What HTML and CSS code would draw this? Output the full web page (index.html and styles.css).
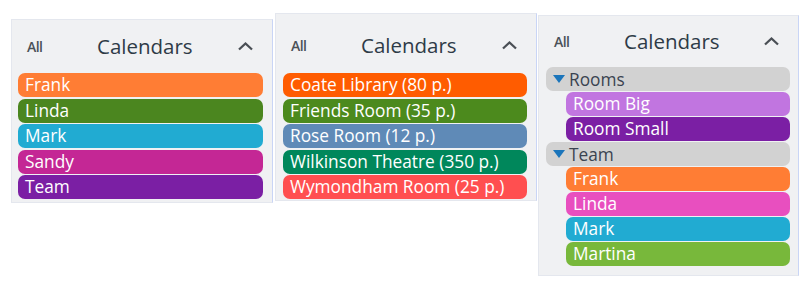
FILE: index.html
```html
<!DOCTYPE html>
<html lang="en">
<head>
    <meta charset="UTF-8">
    <title>Calendars</title>
    <link rel="stylesheet" href="styles.css">
</head>
<body>
    <div class="row">
        <div class="panel panel-people">
            <div class="head">
                <span class="all">All</span>
                <span class="title">Calendars</span>
                <svg class="chev" width="17" height="10" viewBox="0 0 17 10"><path d="M2 8.5 L8.5 2.5 L15 8.5" fill="none" stroke="#4a4f55" stroke-width="2.3"/></svg>
            </div>
            <div class="list">
                <div class="item c-frank">Frank</div>
                <div class="item c-linda">Linda</div>
                <div class="item c-mark">Mark</div>
                <div class="item c-sandy">Sandy</div>
                <div class="item c-team">Team</div>
            </div>
        </div>

        <div class="panel panel-rooms">
            <div class="head">
                <span class="all">All</span>
                <span class="title">Calendars</span>
                <svg class="chev" width="17" height="10" viewBox="0 0 17 10"><path d="M2 8.5 L8.5 2.5 L15 8.5" fill="none" stroke="#4a4f55" stroke-width="2.3"/></svg>
            </div>
            <div class="list">
                <div class="item c-coate">Coate Library (80 p.)</div>
                <div class="item c-friends">Friends Room (35 p.)</div>
                <div class="item c-rose">Rose Room (12 p.)</div>
                <div class="item c-wilkinson">Wilkinson Theatre (350 p.)</div>
                <div class="item c-wymondham">Wymondham Room (25 p.)</div>
            </div>
        </div>

        <div class="panel panel-groups">
            <div class="head">
                <span class="all">All</span>
                <span class="title">Calendars</span>
                <svg class="chev" width="17" height="10" viewBox="0 0 17 10"><path d="M2 8.5 L8.5 2.5 L15 8.5" fill="none" stroke="#4a4f55" stroke-width="2.3"/></svg>
            </div>
            <div class="list">
                <div class="group"><span class="tri"></span>Rooms</div>
                <div class="item sub c-roombig">Room Big</div>
                <div class="item sub c-roomsmall">Room Small</div>
                <div class="group"><span class="tri"></span>Team</div>
                <div class="item sub c-frank">Frank</div>
                <div class="item sub c-linda2">Linda</div>
                <div class="item sub c-mark">Mark</div>
                <div class="item sub c-martina">Martina</div>
            </div>
        </div>
    </div>
</body>
</html>
```

FILE: styles.css
```css
body {
    margin: 0;
    background: #fff;
    font-family: "Open Sans", "Noto Sans", sans-serif;
}
.row {
    display: flex;
    align-items: flex-start;
    padding-left: 11px;
}
.panel {
    background: #f0f1f3;
    border: 1px solid #e4e7ee;
    border-right: 1px solid #c9d5f6;
    box-sizing: border-box;
    width: 262px;
}
.panel-people {
    margin-top: 19px;
    height: 184px;
}
.panel-rooms {
    margin-top: 13px;
    margin-left: 2px;
    height: 188px;
}
.panel-groups {
    margin-top: 15px;
    margin-left: 1px;
    width: 261px;
    height: 261px;
    border-left: 1px solid #e4e7ee;
}
.head {
    display: flex;
    align-items: center;
    height: 52px;
    padding: 0 18px 0 15px;
}
.panel-rooms .head {
    height: 59px;
    padding-top: 3px;
    box-sizing: border-box;
}
.panel-groups .head {
    height: 51px;
    padding-bottom: 1px;
    box-sizing: border-box;
}
.all {
    font-size: 14px;
    font-weight: 600;
    color: #4b5158;
    width: 40px;
    letter-spacing: -0.6px;
}
.title {
    flex: 1;
    font-size: 20.5px;
    color: #2e3b47;
    padding-left: 30px;
}
.chev {
    display: block;
}
.list {
    display: flex;
    flex-direction: column;
    gap: 1.5px;
    padding: 1px 9px 0 6px;
}
.panel-rooms .list {
    padding-top: 0;
    padding-left: 7px;
}
.panel-groups .list {
    gap: 1px;
    padding-top: 0;
    padding-left: 7px;
    padding-right: 8px;
}
.item {
    height: 24px;
    line-height: 24px;
    border-radius: 7px;
    color: #fff;
    font-size: 17.3px;
    padding-left: 7px;
    white-space: nowrap;
}
.item.sub {
    margin-left: 20px;
}
.group {
    height: 24px;
    border-radius: 7px;
    background: #d2d2d2;
    color: #3a4350;
    font-size: 17.3px;
    padding-left: 7px;
    display: flex;
    align-items: center;
}
.tri {
    width: 0;
    height: 0;
    border-left: 6.5px solid transparent;
    border-right: 6.5px solid transparent;
    border-top: 8px solid #1b75bb;
    margin-right: 4px;
}
.c-frank { background: #ff7d34; }
.c-linda { background: #4b861f; }
.c-mark { background: #21abd2; }
.c-sandy { background: #c42795; }
.c-team { background: #7b1fa4; }
.c-coate { background: #ff5c00; }
.c-friends { background: #4c8a1d; }
.c-rose { background: #5f8ab7; }
.c-wilkinson { background: #00875b; }
.c-wymondham { background: #ff4f50; }
.c-roombig { background: #c175e0; }
.c-roomsmall { background: #7b1fa4; }
.c-linda2 { background: #e84fbf; }
.c-martina { background: #78b83b; }
```
